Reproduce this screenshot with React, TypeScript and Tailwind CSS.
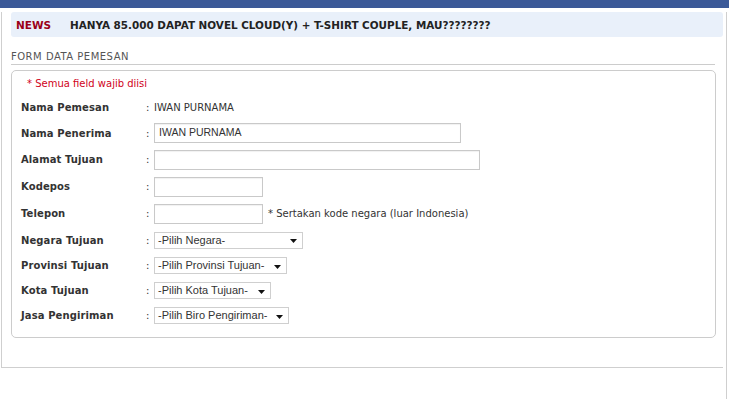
import React from 'react';

type Row =
  | { label: string; kind: 'text'; value: string; h: string }
  | { label: string; kind: 'input'; value?: string; w: string; h: string; note?: string }
  | { label: string; kind: 'select'; value: string; w: string; h: string };

const ROWS: Row[] = [
  { label: 'Nama Pemesan', kind: 'text', value: 'IWAN PURNAMA', h: 'h-[25px]' },
  { label: 'Nama Penerima', kind: 'input', value: 'IWAN PURNAMA', w: 'w-[307px]', h: 'h-[26px]' },
  { label: 'Alamat Tujuan', kind: 'input', w: 'w-[326px]', h: 'h-[27px]' },
  { label: 'Kodepos', kind: 'input', w: 'w-[109px]', h: 'h-[27px]' },
  {
    label: 'Telepon',
    kind: 'input',
    w: 'w-[109px]',
    h: 'h-[27px]',
    note: '* Sertakan kode negara (luar Indonesia)',
  },
  { label: 'Negara Tujuan', kind: 'select', value: '-Pilih Negara-', w: 'w-[149px]', h: 'h-[26px]' },
  { label: 'Provinsi Tujuan', kind: 'select', value: '-Pilih Provinsi Tujuan-', w: 'w-[133px]', h: 'h-[25px]' },
  { label: 'Kota Tujuan', kind: 'select', value: '-Pilih Kota Tujuan-', w: 'w-[117px]', h: 'h-[25px]' },
  { label: 'Jasa Pengiriman', kind: 'select', value: '-Pilih Biro Pengiriman-', w: 'w-[135px]', h: 'h-[25px]' },
];

function Field({ row }: { row: Row }) {
  if (row.kind === 'text') {
    return <span className="text-[#333]">{row.value}</span>;
  }
  if (row.kind === 'input') {
    return (
      <div className="flex items-center">
        <div
          className={`${row.w} h-[20px] border border-[#c9c9c9] shadow-[inset_0_1px_1px_rgba(0,0,0,0.06)] flex items-center pl-[4px] font-['Liberation_Sans',Arial,sans-serif] text-[10.5px] text-[#333]`}
        >
          {row.value}
        </div>
        {row.note && <span className="ml-[5px] text-[#333]">{row.note}</span>}
      </div>
    );
  }
  return (
    <div
      className={`${row.w} h-[17px] border border-[#cfcfcf] flex items-center justify-between pl-[3px] pr-[5px] font-['Liberation_Sans',Arial,sans-serif] text-[11px] text-[#333]`}
    >
      <span>{row.value}</span>
      <svg width="7" height="4" viewBox="0 0 7 4" className="mt-[2px]">
        <path d="M0 0h7L3.5 4z" fill="#111" />
      </svg>
    </div>
  );
}

export default function App() {
  return (
    <div className="w-[729px] h-[399px] bg-white overflow-hidden font-['DejaVu_Sans',Verdana,sans-serif] text-[10px]">
      <div className="h-[8px] bg-[#3b5998]" />
      <div className="w-[727px] h-[391px] border-r border-[#cfcfcf]">
        <div className="ml-[1px] w-[722px] h-[356px] border-l border-b border-[#cfcfcf]">
          <div className="ml-[9px] mt-[4px] w-[712px] h-[25px] rounded-[3px] bg-[#e9f0fa] flex items-center pt-[2px] font-bold">
            <span className="ml-[5px] w-[54px] text-[#9b0018] text-[10.5px]">NEWS</span>
            <span className="text-[#222] text-[10.4px]">HANYA 85.000 DAPAT NOVEL CLOUD(Y) + T-SHIRT COUPLE, MAU????????</span>
          </div>

          <div className="ml-[9px] mt-[12px] w-[704px] h-[16px] border-b border-[#cccccc] leading-[16px] text-[#555] tracking-[0.5px]">
            FORM DATA PEMESAN
          </div>

          <div className="ml-[9px] mt-[5px] w-[705px] h-[268px] border border-[#cccccc] rounded-[5px] flex flex-col">
            <div className="h-[24px] flex items-center pl-[15px] text-[#d0021b]">* Semua field wajib diisi</div>
            {ROWS.map(row => (
              <div key={row.label} className={`${row.h} flex items-center pl-[9px]`}>
                <span className="w-[125px] font-bold text-[#333] tracking-[0.1px]">{row.label}</span>
                <span className="w-[8px] text-[#333]">:</span>
                <Field row={row} />
              </div>
            ))}
          </div>
        </div>
      </div>
    </div>
  );
}
